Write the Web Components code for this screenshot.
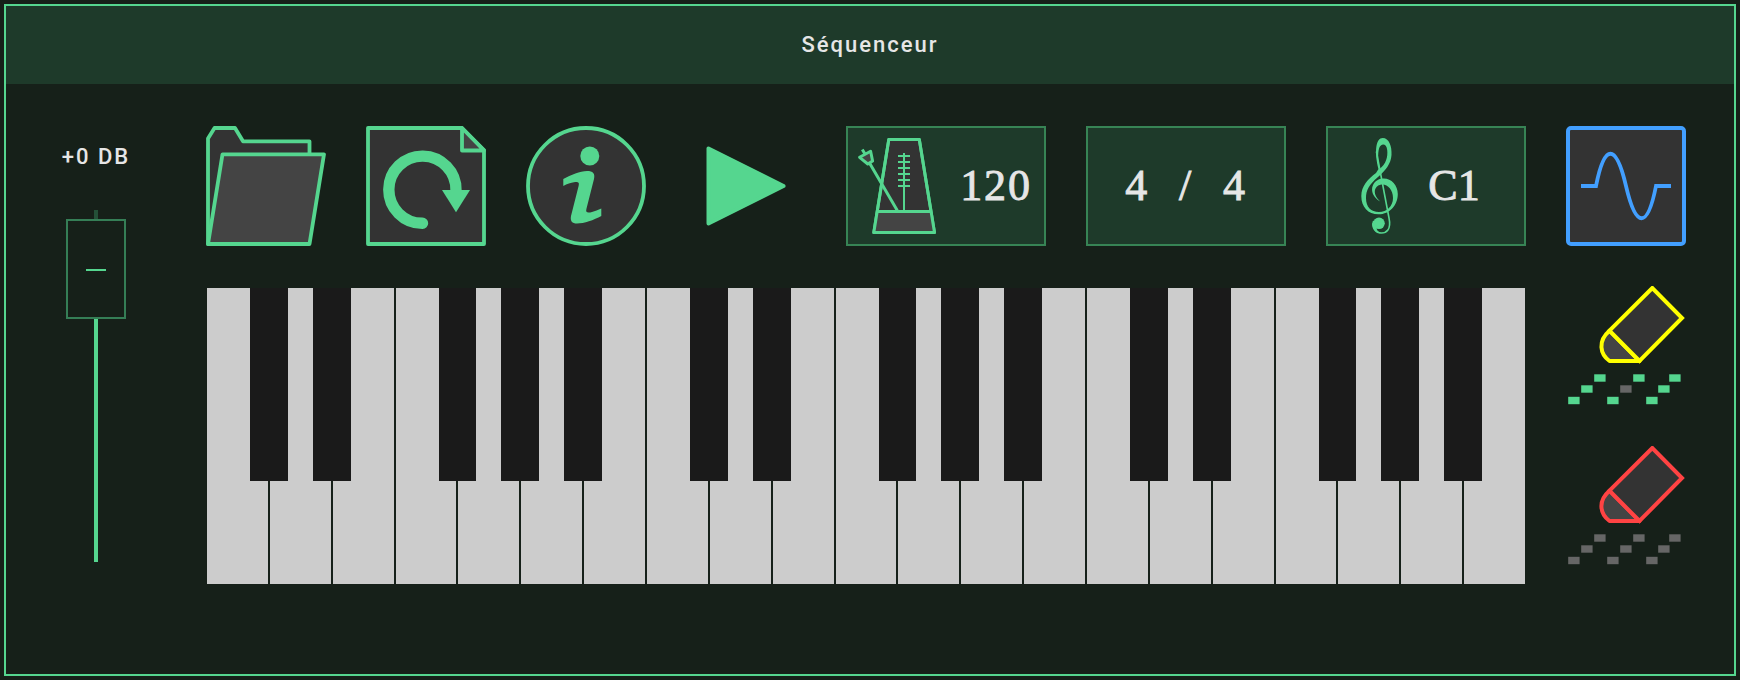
<!DOCTYPE html>
<html lang="fr">
<head>
<meta charset="utf-8">
<title>Séquenceur</title>
<style>
  html, body { margin: 0; height: 100%; background: #162019; }
  body {
    --green: #55d68f; --panel: #1e3a2a; --edge: #378455; --text: #e6e6e6; --bg: #162019;
    box-sizing: border-box; padding: 4px; overflow: hidden;
    font-family: Roboto, sans-serif; color: var(--text);
  }
</style>
</head>
<body>
<seq-window heading="Séquenceur">
  <seq-fader slot="side" label="+0 DB"></seq-fader>
  <seq-icon name="folder"></seq-icon>
  <seq-icon name="reload"></seq-icon>
  <seq-icon name="info"></seq-icon>
  <seq-icon name="play"></seq-icon>
  <seq-field kind="tempo"><seq-icon name="metronome" slot="icon"></seq-icon><span>120</span></seq-field>
  <seq-field kind="signature"><span>4</span><span>/</span><span>4</span></seq-field>
  <seq-field kind="note"><seq-icon name="clef" slot="icon"></seq-icon><span>C1</span></seq-field>
  <seq-icon name="wave"></seq-icon>
  <seq-keyboard slot="keys"></seq-keyboard>
  <seq-icon slot="tools" name="erase-one"></seq-icon>
  <seq-icon slot="tools" name="erase-all"></seq-icon>
</seq-window>
<script>
const notes = (skip) => {
  const p = [[26,88],[65,88],[101,88],[13,99],[52,99],[90,99],[0,110.5],[39,110.5],[78,110.5]];
  return p.map(([x, y], i) => `<rect x="${x + 2.2}" y="${y + .3}" width="11.4" height="7.4" fill="${skip === 'all' || i === 4 ? '#666' : '#55d68f'}"/>`).join('');
};
const eraser = (c, all) => `
  <g stroke="${c}" stroke-width="4">
  <path d="M43.5 44.7C31.5 55 34 68 43.5 75H73.5Z" fill="#444" stroke-linejoin="round"/>
  <path d="M43.5 44.7L86.3 2L116 32L73.5 75Z" fill="#333"/></g>${notes(all)}`;
const icons = {
  folder: `<g stroke="#55d68f" stroke-width="3.8" stroke-linejoin="round"><path d="M2 118V12.5L8.5 2H29L37 15.3H103.5V60L90 118Z" fill="#333"/>
    <path d="M2 118L16.5 28.3H118L103.5 118Z" fill="#444"/></g>`,
  reload: `<g stroke="#55d68f" stroke-width="3.8" stroke-linejoin="round"><path d="M2 2H96L118 24V118H2Z" fill="#333"/><path d="M96 2V24.5H118Z" fill="#444"/></g>
    <path d="M56.5 97.3A33.6 33.6 0 1 1 90 64.5" fill="none" stroke="#55d68f" stroke-width="11.4" stroke-linecap="round"/><path d="M76 64H104L90 86.3Z" fill="#55d68f"/>`,
  info: `<circle cx="60" cy="60" r="58" fill="#333" stroke="#55d68f" stroke-width="3.8"/><circle cx="63.8" cy="30" r="9.5" fill="#55d68f"/>
    <path d="M37.3 53C45 49 54 45 61 45C67 45 69.3 47.5 68 53L60.4 83C59.3 87 62 87 66 86C69 85.2 72 84 75.3 82.5V90C68 94 58 97.5 51 97.5C46 97.5 44 95 45 90L52.6 60C53.7 56 51.5 55.8 48 56.3C45 56.8 41 58 37.3 60Z" fill="#55d68f"/>`,
  play: `<path d="M22.5 22.5V97.5L97.5 60Z" fill="#55d68f" stroke="#55d68f" stroke-width="4" stroke-linejoin="round"/>`,
  metronome: `<g transform="translate(1.8)" fill="none" stroke="#55d68f" stroke-width="3" stroke-linejoin="round"><path d="M41 13.5H71.5L86.7 106.5H26Z" fill="#333"/><path d="M29.5 85.5H83L86.7 106.5H26Z" fill="#444" stroke="none"/>
    <path d="M29.5 85.5H83M41 13.5H71.5L86.7 106.5H26Z"/><path d="M56.2 27V85" stroke-width="2"/><path d="M50.2 30H62.2M50.2 36H62.2M50.2 42H62.2M50.2 48H62.2M50.2 54H62.2M50.2 60H62.2" stroke-width="2"/>
    <path d="M49.5 84.5L22 37.5M17.5 28.5L14.5 23.5" stroke-width="3"/><path d="M11.8 31.3L22.8 25.2L24.8 35L20 38Z" fill="#444" stroke-width="3"/></g>`,
  clef: `<g fill="none" stroke="#55d68f" stroke-linecap="round"><path d="M50.5 26L63 92C65.5 104 60 107 55.5 107C49.5 107 45.5 101.5 47.5 95.5" stroke-width="1.6"/></g>
    <g fill="#55d68f"><path fill-rule="evenodd" d="M52.5 43C48 25 50 12 56.7 12C63 12 66 20 65.5 29C65 38 59 45 52 51C43 59 40 64 40 72C40 81 45 86 53 86C61 86 67 80 67 72C67 64 62 58.5 56.5 58.5C49 58.5 45 67 54.2 75.4C41 68 45.5 53 57 52.5C65 52 71.8 59 71.8 68C71.8 79 64 88.3 52.5 88.3C42 88.3 35.3 81 35.3 70C35.3 60 42 53 50 47ZM53.5 43C60 38 62 31 61.2 24C60.5 17 55 17 53.2 22C51.4 28 52.3 36 53.5 43Z"/>
    <circle cx="53" cy="97.3" r="5.8"/><path d="M46.3 97C46.5 103 49.5 107 55 107.5C50.5 105 50 102 51 100Z"/></g>`,
  wave: `<rect x="2" y="2" width="116" height="116" rx="3" fill="#333" stroke="#429fff" stroke-width="4"/><path d="M15 60H30C38.5 17 50 17 60 60S81.5 103 90 60H105" fill="none" stroke="#429fff" stroke-width="3.8"/>`,
  'erase-one': eraser('#ff0', ''),
  'erase-all': eraser('#ff4343', 'all')
};
const shadow = (el, html) => { el.attachShadow({ mode: 'open' }).innerHTML = html; };

customElements.define('seq-icon', class extends HTMLElement {
  connectedCallback() {
    shadow(this, `<style>:host{display:block;width:120px;height:120px;flex:none}svg{display:block}</style>
      <svg width="120" height="120" viewBox="0 0 120 120">${icons[this.getAttribute('name')]}</svg>`);
  }
});
customElements.define('seq-field', class extends HTMLElement {
  connectedCallback() {
    shadow(this, `<style>
      :host{display:flex;box-sizing:border-box;width:200px;height:120px;border:2px solid var(--edge);background:var(--panel);align-items:center;
        font:44px/1 "Liberation Serif",serif;color:var(--text);-webkit-text-stroke:.9px var(--text)}
      ::slotted(seq-icon){margin:-2px 0 -2px -2px;width:100px!important}
      .value{flex:1;display:flex;justify-content:center;letter-spacing:1.8px;padding-left:2px}
      :host([kind=note]) .value{padding:0 42px 0 0;letter-spacing:0}
      :host([kind=signature]) .value{gap:30px;padding:0}
      </style><slot name="icon"></slot><div class="value"><slot></slot></div>`);
  }
});
customElements.define('seq-fader', class extends HTMLElement {
  connectedCallback() {
    shadow(this, `<style>
      :host{display:flex;flex-direction:column;align-items:center;width:180px}
      .label{font:500 22px/30px Roboto,sans-serif;letter-spacing:2px;margin-top:58px;height:30px;white-space:nowrap}
      .rail{display:flex;flex-direction:column;align-items:center;margin-top:38px}
      .top{width:4px;height:9px;background:#245038}
      .thumb{box-sizing:border-box;width:60px;height:100px;border:2px solid #357e56;display:grid;place-items:center}
      .thumb i{width:20px;height:2px;background:var(--green);margin-top:2px}
      .fill{width:4px;height:243px;background:var(--green)}
      </style><div class="label">${this.getAttribute('label')}</div>
      <div class="rail"><div class="top"></div><div class="thumb"><i></i></div><div class="fill"></div></div>`);
  }
});
customElements.define('seq-keyboard', class extends HTMLElement {
  connectedCallback() {
    const keys = Array.from({ length: 21 }, (_, i) => `<div class="key">${[0, 1, 3, 4, 5].includes(i % 7) ? '<b></b>' : ''}</div>`).join('');
    shadow(this, `<style>
      :host{display:grid;grid-template-columns:repeat(21,1fr);width:1320px;height:296px}
      .key{position:relative;margin:0 1px;background:#ccc}
      b{position:absolute;z-index:1;right:-19.857px;top:0;width:37.714px;height:193px;background:#1a1a1a}
      </style>${keys}`);
  }
});
customElements.define('seq-window', class extends HTMLElement {
  connectedCallback() {
    shadow(this, `<style>
      :host{display:flex;flex-direction:column;box-sizing:border-box;width:1732px;height:672px;border:2px solid var(--green);background:var(--bg)}
      header{height:78px;background:var(--panel);display:grid;place-items:center;font:500 22px/30px Roboto,sans-serif;letter-spacing:2px}
      main{display:flex;gap:20px}
      .area{display:flex;flex-direction:column;padding-top:42px;gap:42px}
      .row{display:flex;gap:40px}
      .tools{display:flex;flex-direction:column;gap:40px;margin-top:-2px}
      </style><header>${this.getAttribute('heading')}</header>
      <main><slot name="side"></slot><div class="area"><div class="row"><slot></slot></div>
      <div class="row"><slot name="keys"></slot><div class="tools"><slot name="tools"></slot></div></div></div></main>`);
  }
});
</script>
</body>
</html>
